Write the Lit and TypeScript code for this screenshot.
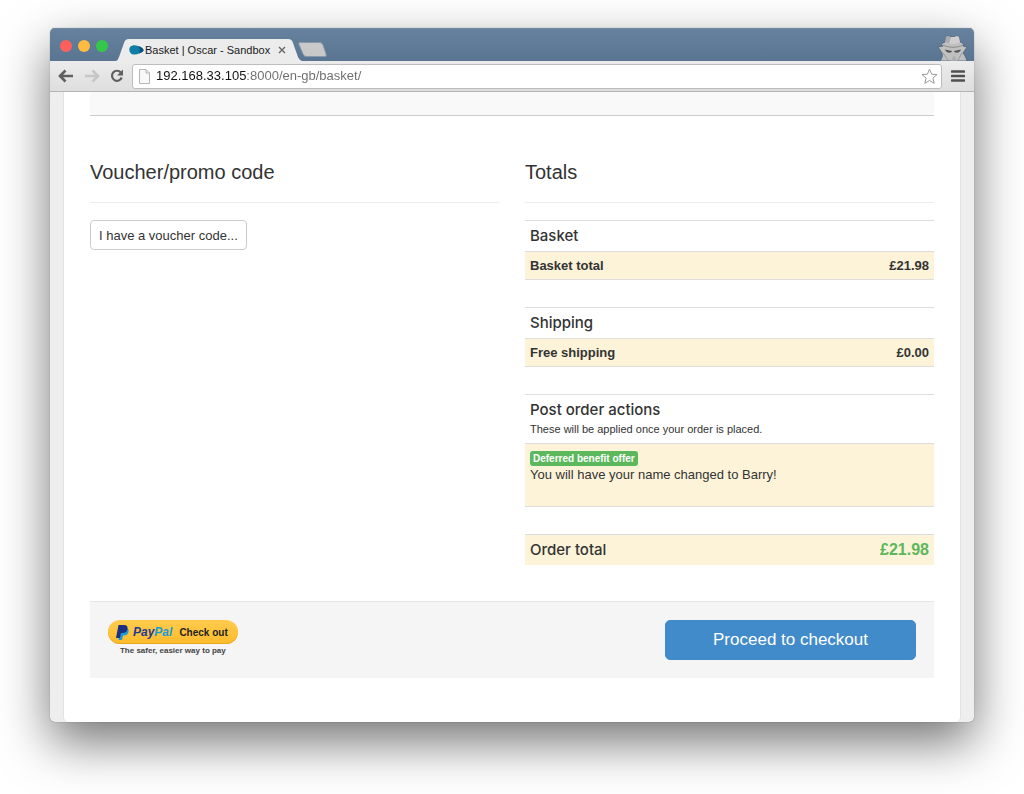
import { LitElement, html, css } from "lit";
import { customElement } from "lit/decorators.js";

interface Line {
  label: string;
  amount: string;
}

interface Group {
  title: string;
  lines: Line[];
}

const groups: Group[] = [
  { title: "Basket", lines: [{ label: "Basket total", amount: "£21.98" }] },
  { title: "Shipping", lines: [{ label: "Free shipping", amount: "£0.00" }] },
];

@customElement("browser-chrome")
class BrowserChrome extends LitElement {
  static styles = css`
    :host {
      display: block;
      font-family: "Liberation Sans", Arial, sans-serif;
    }
    svg {
      display: block;
      flex: none;
    }
    button {
      font: inherit;
      border: 0;
      padding: 0;
      background: none;
      display: flex;
    }
    .titlebar {
      display: flex;
      align-items: flex-end;
      height: 33px;
      padding: 0 5px 0 10px;
      background: linear-gradient(#67829f, #5a7592);
      box-shadow: inset 0 1px #7089a3;
    }
    .lights {
      display: flex;
      gap: 6px;
      height: 33px;
      align-items: center;
      margin-right: 8px;
      padding-top: 2px;
      box-sizing: border-box;
    }
    .light {
      width: 12px;
      height: 12px;
      border-radius: 50%;
    }
    .red { background: #fc605b; }
    .amber { background: #fdbc40; }
    .green { background: #34c84a; }
    .tab {
      display: flex;
      height: 22px;
    }
    .face {
      display: flex;
      align-items: center;
      background: #ececec;
      font-size: 11px;
      color: #1a1a1a;
      white-space: nowrap;
    }
    .face svg { margin-right: 1px; }
    .close { margin-left: 7px; }
    .newtab { margin: 0 auto 4px -4px; }
    .toolbar {
      display: flex;
      align-items: center;
      height: 31px;
      padding: 0 9px 0 8px;
      box-sizing: border-box;
      background: linear-gradient(#ececec, #dedede);
      border-bottom: 1px solid #b4b4b4;
    }
    .nav {
      display: flex;
      gap: 10px;
      margin-right: 8px;
    }
    .address {
      flex: 1;
      display: flex;
      align-items: center;
      height: 25px;
      box-sizing: border-box;
      padding: 0 3px 0 6px;
      border: 1px solid #bdbdbd;
      border-radius: 3px;
      background: #fff;
      margin-right: 9px;
    }
    .url {
      flex: 1;
      min-width: 0;
      border: 0;
      outline: 0;
      padding: 0;
      margin-left: 6px;
      font: 13px/20px "Liberation Sans", Arial, sans-serif;
      color: transparent;
      background: linear-gradient(90deg, #111 91px, #6c6c6c 91px);
      -webkit-background-clip: text;
      background-clip: text;
    }
  `;

  render() {
    return html`
      <header>
        <div class="titlebar">
          <div class="lights">
            <button class="light red" aria-label="Close window"></button>
            <button class="light amber" aria-label="Minimise window"></button>
            <button class="light green" aria-label="Zoom window"></button>
          </div>
          <div class="tab">
            <svg width="13" height="22" viewBox="0 0 13 22">
              <path d="M0 22C2 21 2 20 3 18L8 4C9 1 10 0 13 0V22Z" fill="#ececec" />
            </svg>
            <div class="face">
              <svg width="15" height="10" viewBox="0 0 15 10">
                <path d="M1 2C3 0 6 0 9 1C12 2 14.500 3.500 14.500 5C14.500 7 12 7.500 10 8.500C7 10 3 10 1.500 8C0 6 0 3.500 1 2Z" fill="#0e7ea8" />
                <path d="M9 1C12 2 14.500 3.500 14.500 5C14.500 7 12 7.500 10 8.500C11 6 11 3 9 1Z" fill="#0a5480" />
              </svg>
              <span>Basket | Oscar - Sandbox</span>
              <button class="close" aria-label="Close tab">
                <svg width="10" height="10" viewBox="0 0 10 10">
                  <path d="M2 2L8 8M8 2L2 8" stroke="#666" stroke-width="1.400" />
                </svg>
              </button>
            </div>
            <svg width="14" height="22" viewBox="0 0 14 22">
              <path d="M0 0C3 0 4 1 5 4L10 18C11 20 12 21 14 22H0Z" fill="#ececec" />
            </svg>
          </div>
          <button class="newtab" aria-label="New tab">
            <svg width="29" height="15" viewBox="0 0 29 15">
              <path d="M2.500.5H21C23 .5 24 1 25 3L28 12C28.500 14 28 14.500 26.500 14.500H9C7 14.500 6 14 5 12L1 2.500C.5 1 1 .5 2.500.5Z" fill="#c9c9c9" stroke="#8798ab" />
            </svg>
          </button>
          <svg width="32" height="26" viewBox="0 0 32 26">
            <path d="M3 26C5 23 6 21 5 18L1 12L6 11C4 10 4 9 6 8L8 7L9 1.500C11 1 12 1 14 2L17 2L20 1L22 2L23 7C26 8 27 9 26 11L30 12L26 18C28 20 29 23 30 26Z" fill="#c0c0c0" stroke="#4c627b" stroke-width=".8" />
            <path d="M14 2L17 2L20 1L22 2L23 7C20 9 16 9 12 8.500Z" fill="#cfcfcf" />
            <path d="M9 1.500C11 1 12 1 14 2L12 8.500L8 7ZM17 20L20 26H14Z" fill="#adadad" />
            <path d="M6 10C12 13 20 13 26 10" fill="none" stroke="#8a8a8a" />
            <path d="M8 14.500L15 16C14.500 18.500 9.500 18.500 8 14.500ZM24 14.500L17 16C17.500 18.500 22.500 18.500 24 14.500Z" fill="#555" />
            <path d="M6 18L11 25M25 18L21 25" fill="none" stroke="#9a9a9a" />
          </svg>
        </div>
        <div class="toolbar">
          <div class="nav">
            <button aria-label="Back">
              <svg width="16" height="14" viewBox="0 0 16 14">
                <path d="M15 7H3M7.500 1.500L2 7L7.500 12.500" fill="none" stroke="#5f5f5f" stroke-width="2.600" />
              </svg>
            </button>
            <button aria-label="Forward">
              <svg width="16" height="14" viewBox="0 0 16 14">
                <path d="M1 7H13M8.500 1.500L14 7L8.500 12.500" fill="none" stroke="#c6c6c6" stroke-width="2.600" />
              </svg>
            </button>
            <button aria-label="Reload">
              <svg width="14" height="14" viewBox="0 0 14 14">
                <path d="M10.800 3.500A5 5 0 1 0 11.700 8.500" fill="none" stroke="#5f5f5f" stroke-width="2.200" />
                <path d="M13 .5V6.500H7Z" fill="#5f5f5f" />
              </svg>
            </button>
          </div>
          <div class="address">
            <svg width="11" height="15" viewBox="0 0 11 15">
              <path d="M.5.5H7L10.500 4V14.500H.5Z" fill="#f8f8f8" stroke="#b5b5b5" />
              <path d="M7 .5V4H10.500" fill="none" stroke="#b5b5b5" />
            </svg>
            <input class="url" type="text" aria-label="Address" value="192.168.33.105:8000/en-gb/basket/" />
            <button aria-label="Bookmark this page">
              <svg width="17" height="17" viewBox="0 0 17 17">
                <path d="M8.500 1.200L10.600 6.200L16 6.600L11.900 10.100L13.200 15.400L8.500 12.500L3.800 15.400L5.100 10.100L1 6.600L6.400 6.200Z" fill="#fff" stroke="#9a9a9a" stroke-linejoin="round" />
              </svg>
            </button>
          </div>
          <button aria-label="Menu">
            <svg width="14" height="12" viewBox="0 0 14 12">
              <path d="M1 1.500H13M1 6H13M1 10.500H13" stroke="#505050" stroke-width="2.600" stroke-linecap="round" />
            </svg>
          </button>
        </div>
      </header>
    `;
  }
}

@customElement("basket-totals")
class BasketTotals extends LitElement {
  static styles = css`
    :host {
      display: flex;
      flex-direction: column;
      gap: 27px;
    }
    table {
      width: 100%;
      border-collapse: separate;
      border-spacing: 0;
      line-height: 18px;
    }
    th, td {
      padding: 5px 5px 4px;
      border-top: 1px solid #ddd;
      text-align: left;
      vertical-align: top;
      font-weight: bold;
    }
    .closed tbody tr:last-child > * { border-bottom: 1px solid #ddd; }
    .head { padding: 6px 5px; }
    h3 {
      margin: 0;
      font-family: Inter, "Liberation Sans", sans-serif;
      font-size: 15px;
      line-height: 18px;
      font-weight: 500;
    }
    .note {
      margin: 3px 0 0;
      font-size: 11px;
      line-height: 15px;
      font-weight: 400;
    }
    .mark > * { background: #fcf3d9; }
    .mark .amount { text-align: right; }
    .mark .offer {
      padding: 6px 5px 22px;
      font-weight: 400;
    }
    .badge {
      display: block;
      width: fit-content;
      margin-top: 1px;
      padding: 0 3px;
      border-radius: 3px;
      background: #5cb85c;
      color: #fff;
      font-size: 10px;
      line-height: 15px;
      font-weight: bold;
    }
    .grand > * { padding: 6px 5px; }
    .grand .amount {
      color: #5cb85c;
      font-size: 16px;
    }
  `;

  render() {
    return html`
      ${groups.map(
        (group) => html`
          <table class="closed">
            <thead>
              <tr><th class="head" colspan="2"><h3>${group.title}</h3></th></tr>
            </thead>
            <tbody>
              ${group.lines.map(
                (line) => html`
                  <tr class="mark">
                    <th scope="row">${line.label}</th>
                    <td class="amount">${line.amount}</td>
                  </tr>
                `
              )}
            </tbody>
          </table>
        `
      )}
      <table class="closed">
        <thead>
          <tr>
            <th class="head">
              <h3>Post order actions</h3>
              <p class="note">These will be applied once your order is placed.</p>
            </th>
          </tr>
        </thead>
        <tbody>
          <tr class="mark">
            <td class="offer">
              <span class="badge">Deferred benefit offer</span>
              You will have your name changed to Barry!
            </td>
          </tr>
        </tbody>
      </table>
      <table>
        <tbody>
          <tr class="mark grand">
            <th scope="row"><h3>Order total</h3></th>
            <td class="amount">£21.98</td>
          </tr>
        </tbody>
      </table>
    `;
  }
}

@customElement("app-root")
class AppRoot extends LitElement {
  static styles = css`
    :host {
      display: flex;
      min-height: 100vh;
      box-sizing: border-box;
      padding: 28px 50px 72px;
      background: #fff;
      color: #333;
      font-family: "Liberation Sans", Arial, sans-serif;
      font-size: 13px;
      line-height: 18px;
    }
    .window {
      flex: 1;
      min-width: 0;
      display: flex;
      flex-direction: column;
      overflow: hidden;
      border-radius: 5px;
      background: #eee;
      box-shadow: 0 0 1px rgba(0, 0, 0, 0.5), 0 20px 50px rgba(0, 0, 0, 0.55);
    }
    main {
      flex: 1;
      margin: 0 13px;
      padding: 0 26px 44px;
      background: #fff;
      border: solid #e2e2e2;
      border-width: 0 1px;
      border-radius: 0 0 5px 5px;
    }
    .items {
      height: 23px;
      background: #f9f9f9;
      border-bottom: 1px solid #ccc;
    }
    .columns {
      display: grid;
      grid-template-columns: 1fr 1fr;
      gap: 26px;
      padding: 44px 0 36px;
    }
    h2 {
      margin: 0 0 17px;
      padding-bottom: 17px;
      border-bottom: 1px solid #eee;
      font-size: 20px;
      line-height: 25px;
      font-weight: 400;
    }
    button { font-family: inherit; }
    .voucher {
      height: 30px;
      padding: 0 8px;
      border: 1px solid #ccc;
      border-radius: 4px;
      background: #fff;
      color: #333;
      font-size: 13px;
    }
    .actions {
      display: flex;
      justify-content: space-between;
      align-items: flex-start;
      padding: 18px;
      background: #f5f5f5;
      border-top: 1px solid #e5e5e5;
    }
    .express {
      display: flex;
      flex-direction: column;
      align-items: center;
      gap: 2px;
      font-size: 8px;
      line-height: 10px;
      font-weight: bold;
      color: #444;
    }
    .paypal {
      display: flex;
      align-items: center;
      height: 24px;
      padding: 0 10px 0 8px;
      border: 0;
      border-radius: 12px;
      background: linear-gradient(#ffcb4d, #fdbb2d);
      box-shadow: inset 0 -1px #e9a820;
      color: #222;
      font-size: 10px;
      font-weight: bold;
      white-space: nowrap;
    }
    .paypal svg { margin-right: 4px; }
    .brand {
      margin-right: 7px;
      font-size: 12px;
      font-style: italic;
      color: #1f3a93;
    }
    .pal { color: #1a9cd8; }
    .checkout {
      height: 40px;
      padding: 0 47px;
      border: 1px solid #428bca;
      border-radius: 5px;
      background: #428bca;
      color: #fff;
      font-size: 17px;
    }
  `;

  render() {
    return html`
      <div class="window">
        <browser-chrome></browser-chrome>
        <main>
          <div class="items"></div>
          <div class="columns">
            <section>
              <h2>Voucher/promo code</h2>
              <button class="voucher">I have a voucher code...</button>
            </section>
            <section>
              <h2>Totals</h2>
              <basket-totals></basket-totals>
            </section>
          </div>
          <div class="actions">
            <div class="express">
              <button class="paypal">
                <svg width="13" height="15" viewBox="0 0 13 15" aria-hidden="true">
                  <path d="M4 3H10C12.500 3.500 13 5 12.500 7C12 9.500 10 10.500 8 10.500H7L6 15H2.500Z" fill="#1a9cd8" />
                  <path d="M2.500 0H8C10.500 0 12 1.500 11.500 4C11 7 9 8 6.500 8H5L4 13H0Z" fill="#1c2f80" />
                </svg>
                <span class="brand">Pay<span class="pal">Pal</span></span>
                <span>Check out</span>
              </button>
              <span>The safer, easier way to pay</span>
            </div>
            <button class="checkout">Proceed to checkout</button>
          </div>
        </main>
      </div>
    `;
  }
}
